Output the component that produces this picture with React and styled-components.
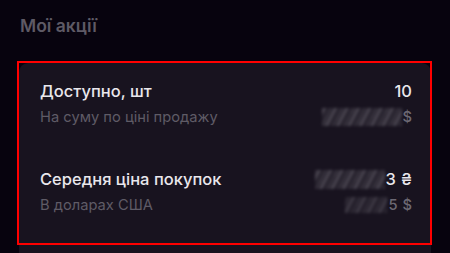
import React from "react";
import styled, { createGlobalStyle } from "styled-components";

const GlobalStyle = createGlobalStyle`
  html, body {
    margin: 0;
    padding: 0;
    background: #07030e;
    font-family: Inter, "Noto Sans", sans-serif;
    -webkit-font-smoothing: antialiased;
  }
`;

const Page = styled.div`
  width: 450px;
  height: 253px;
  overflow: hidden;
  background: #07030e;
`;

const Heading = styled.h2`
  margin: 0;
  padding: 15px 0 0 20px;
  font-size: 17.5px;
  line-height: 22px;
  font-weight: 600;
  color: #5e5a65;
`;

const Card = styled.div`
  position: relative;
  margin: 26px 0 0 19px;
  width: 412px;
  height: 210px;
  box-sizing: border-box;
  padding: 18px 19px 0 21px;
  background: #18131f;
  border-radius: 9px 9px 0 0;

  // red annotation frame from the screenshot
  &::after {
    content: "";
    position: absolute;
    top: -2px;
    left: -2px;
    width: 415px;
    height: 184px;
    box-sizing: border-box;
    border: 2px solid #ff0000;
    pointer-events: none;
  }
`;

const Row = styled.div`
  display: flex;
  justify-content: space-between;
  align-items: flex-start;
  margin-bottom: ${(p) => p.gap || 0}px;
`;

const Col = styled.div`
  display: flex;
  flex-direction: column;
  align-items: ${(p) => (p.right ? "flex-end" : "flex-start")};
  gap: 7px;
`;

const Title = styled.div`
  font-size: 16.5px;
  line-height: 20px;
  font-weight: 450;
  color: #e9e7ec;
`;

const Sub = styled.div`
  font-size: 14.7px;
  line-height: 18px;
  color: #5f5b66;
`;

const Value = styled.div`
  display: flex;
  align-items: center;
  font-size: ${(p) => (p.small ? 14.7 : 16.5)}px;
  line-height: ${(p) => (p.small ? 18 : 20)}px;
  font-weight: 500;
  color: ${(p) => (p.small ? "#6c6873" : "#e9e7ec")};
`;

const Blur = styled.span`
  display: inline-block;
  width: ${(p) => p.w}px;
  height: ${(p) => p.h}px;
  margin-right: ${(p) => p.mr || 1}px;
  background: repeating-linear-gradient(
    -62deg,
    rgba(110, 106, 116, 0.5) 0px,
    rgba(60, 56, 66, 0.25) 4px,
    rgba(140, 136, 146, 0.55) 7px,
    rgba(55, 51, 61, 0.2) 10px
  );
  filter: blur(1.8px);
  opacity: ${(p) => p.o || 0.9};
`;

const Unit = styled.span`
  margin-left: ${(p) => p.ml || 0}px;
`;

export default function App() {
  return (
    <Page>
      <GlobalStyle />
      <Heading>Мої акції</Heading>
      <Card>
        <Row gap={43}>
          <Col>
            <Title>Доступно, шт</Title>
            <Sub>На суму по ціні продажу</Sub>
          </Col>
          <Col right>
            <Value>10</Value>
            <Value small>
              <Blur w={80} h={18} />
              <Unit>$</Unit>
            </Value>
          </Col>
        </Row>
        <Row>
          <Col>
            <Title>Середня ціна покупок</Title>
            <Sub>В доларах США</Sub>
          </Col>
          <Col right>
            <Value>
              <Blur w={70} h={19} />
              <span>3</span>
              <Unit ml={5}>₴</Unit>
            </Value>
            <Value small>
              <Blur w={42} h={16} o={0.7} />
              <span>5</span>
              <Unit ml={5}>$</Unit>
            </Value>
          </Col>
        </Row>
      </Card>
    </Page>
  );
}
